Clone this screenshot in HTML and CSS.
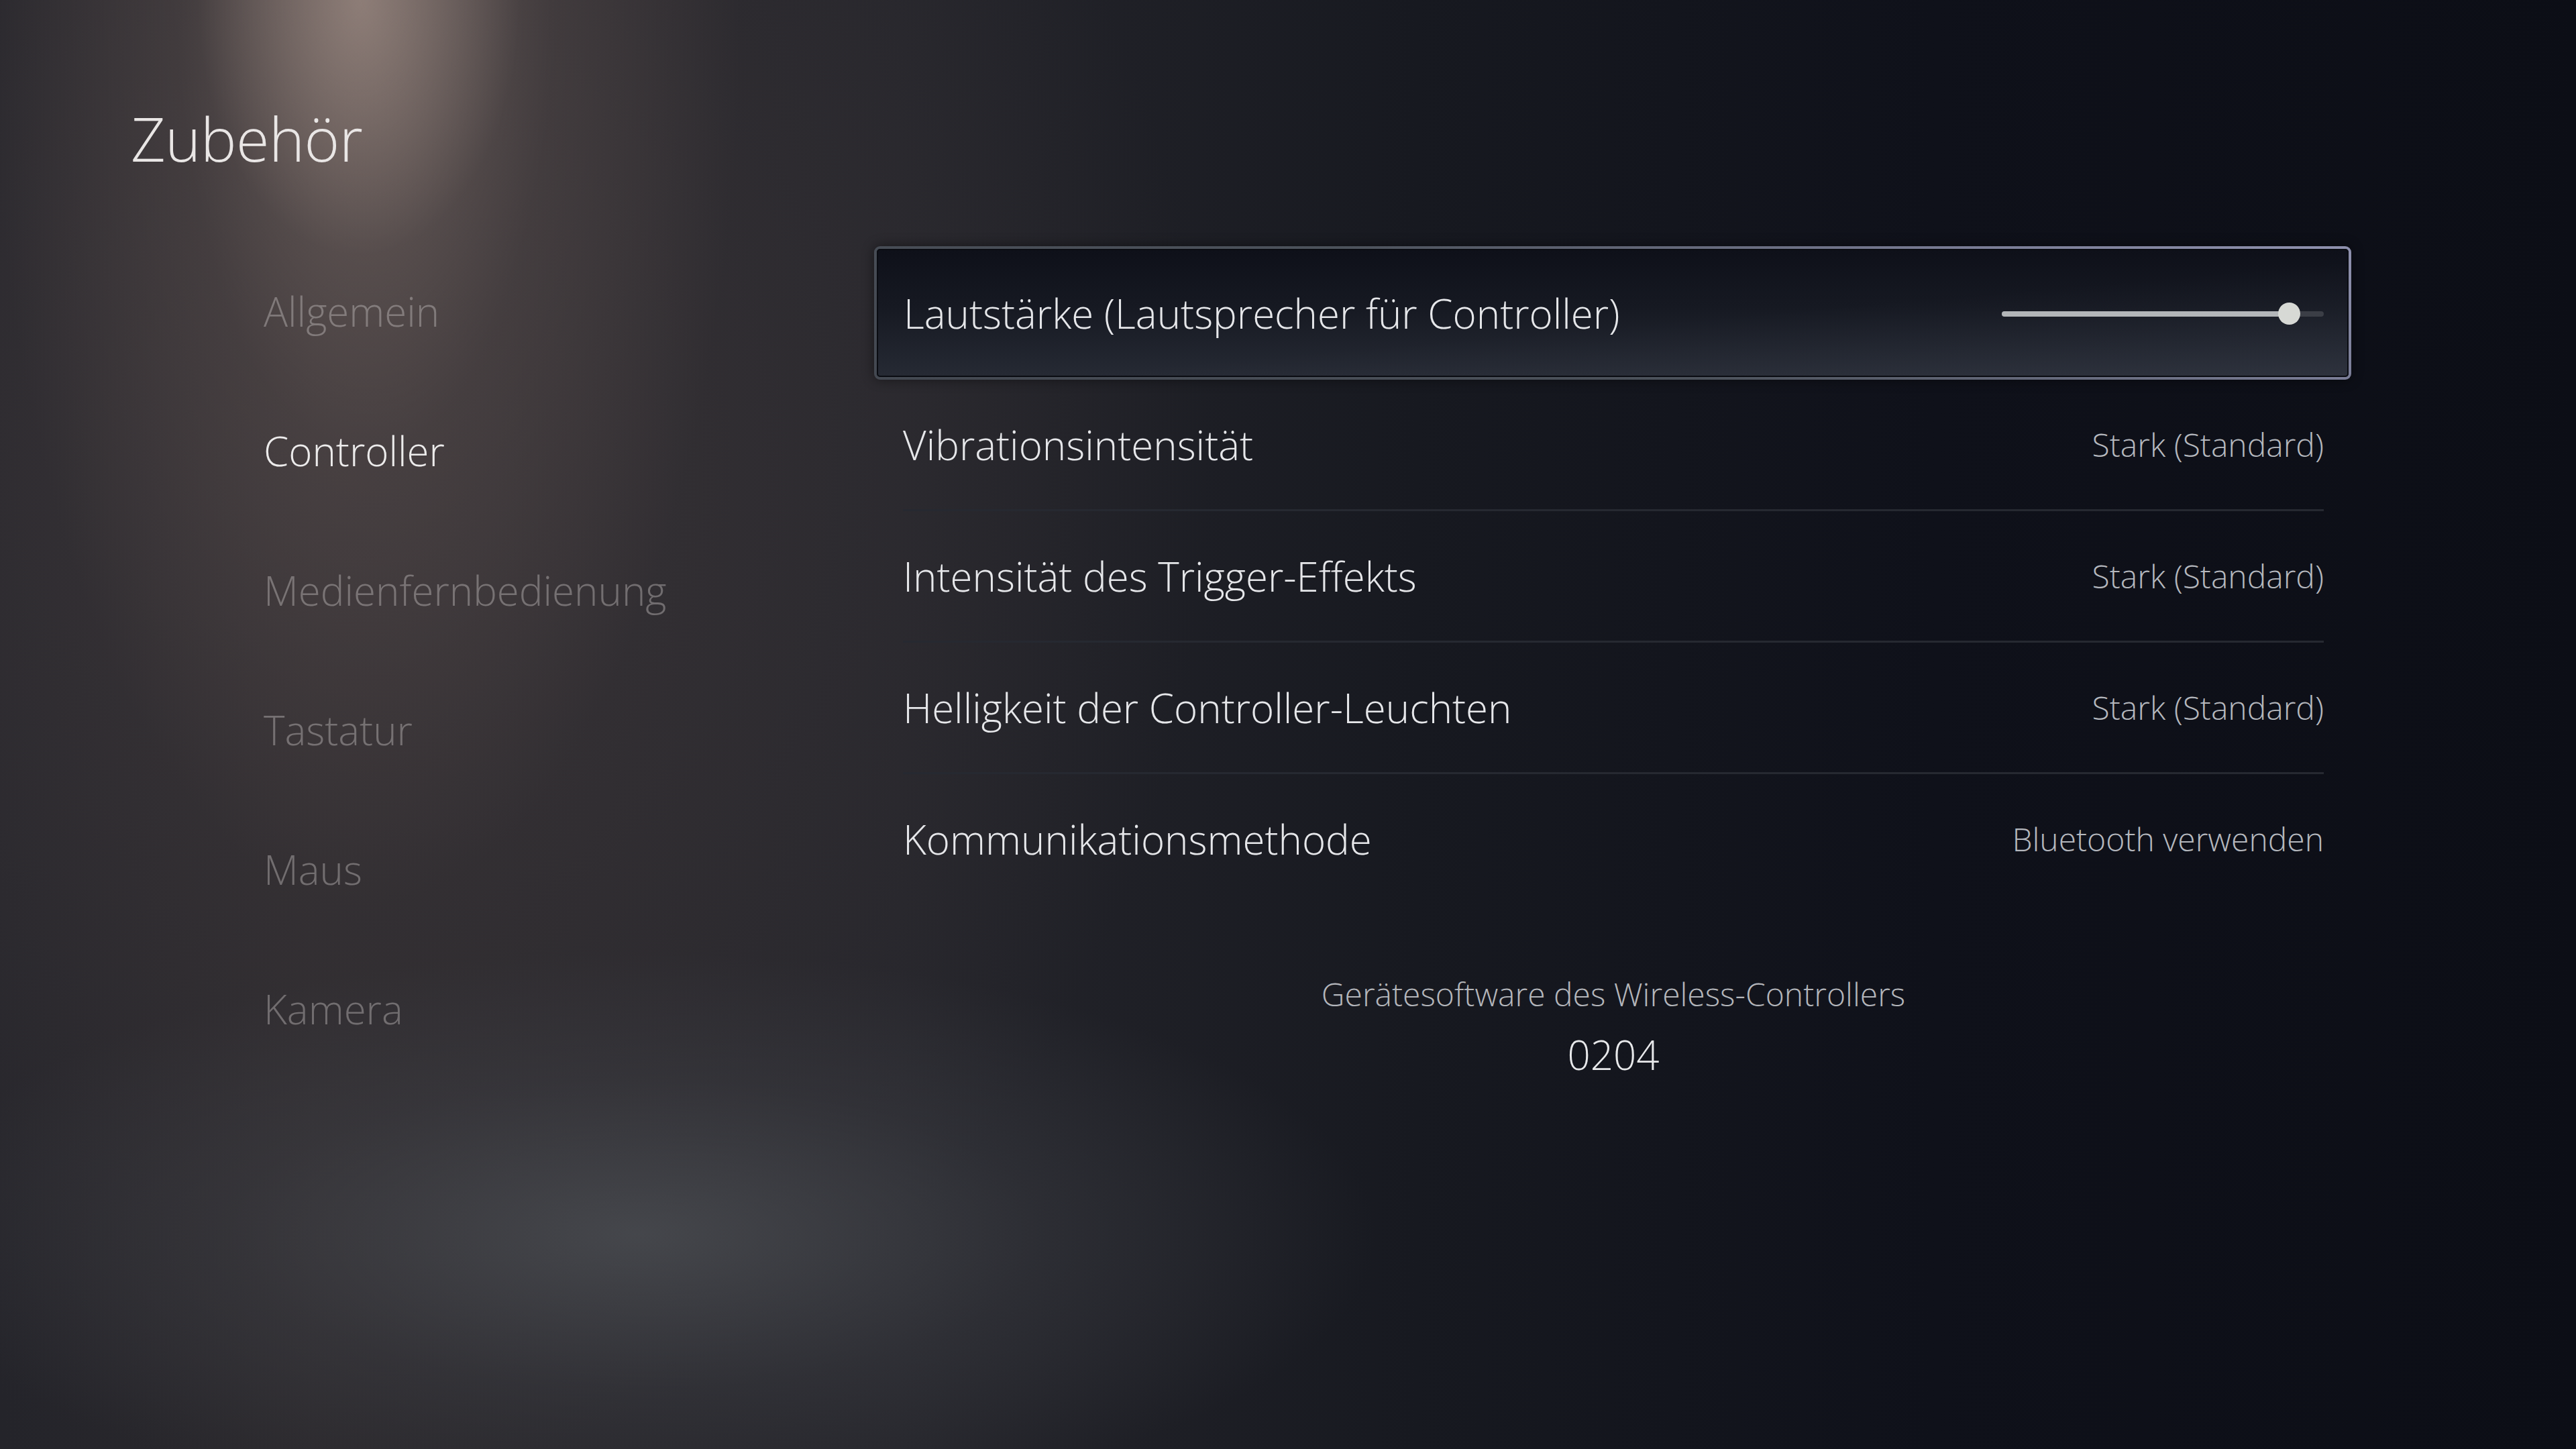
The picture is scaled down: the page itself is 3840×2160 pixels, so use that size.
FILE: index.html
```html
<!DOCTYPE html>
<html lang="de">
<head>
<meta charset="utf-8">
<title>Zubehör</title>
<link rel="stylesheet" href="styles.css">
</head>
<body>
<div class="screen">
  <h1 class="title">Zubehör</h1>
  <div class="content">
    <nav class="menu">
      <div class="menu-item">Allgemein</div>
      <div class="menu-item active">Controller</div>
      <div class="menu-item">Medienfernbedienung</div>
      <div class="menu-item">Tastatur</div>
      <div class="menu-item">Maus</div>
      <div class="menu-item">Kamera</div>
    </nav>
    <main class="panel">
      <div class="row focus">
        <span class="label">Lautstärke (Lautsprecher für Controller)</span>
        <div class="slider">
          <div class="slider-fill" style="width: 89.2%"></div>
          <div class="slider-knob" style="left: 89.2%"></div>
        </div>
      </div>
      <div class="row">
        <span class="label">Vibrationsintensität</span>
        <span class="value">Stark (Standard)</span>
      </div>
      <div class="row">
        <span class="label">Intensität des Trigger-Effekts</span>
        <span class="value">Stark (Standard)</span>
      </div>
      <div class="row">
        <span class="label">Helligkeit der Controller-Leuchten</span>
        <span class="value">Stark (Standard)</span>
      </div>
      <div class="row last">
        <span class="label">Kommunikationsmethode</span>
        <span class="value">Bluetooth verwenden</span>
      </div>
      <div class="info">
        <div class="info-title">Gerätesoftware des Wireless-Controllers</div>
        <div class="info-value">0204</div>
      </div>
    </main>
  </div>
</div>
</body>
</html>
```
FILE: styles.css
```css
html, body {
  margin: 0;
  padding: 0;
}
body {
  width: 3840px;
  height: 2160px;
  overflow: hidden;
  font-family: "Open Sans", "Noto Sans", sans-serif;
  font-weight: 300;
  color: #e6e7ea;
  background:
    radial-gradient(ellipse 240px 380px at 535px 0px, rgba(175,155,146,0.5), rgba(175,155,146,0) 100%),
    radial-gradient(ellipse 560px 1350px at 545px 0px, rgba(132,116,110,0.7), rgba(100,88,86,0.32) 50%, rgba(90,80,80,0) 100%),
    radial-gradient(ellipse 1100px 420px at 950px 1840px, rgba(80,83,88,0.7), rgba(70,72,78,0.3) 55%, rgba(60,60,66,0) 100%),
    radial-gradient(ellipse 1300px 1500px at 500px 700px, rgba(70,62,64,0.55), rgba(60,55,58,0) 100%),
    linear-gradient(to right, #24242a 0%, #2b292d 12%, #25252b 35%, #171920 55%, #0f111a 75%, #0c0e16 100%);
}
.screen {
  padding: 161px 0 0 195px;
}
.title {
  margin: 0;
  font-size: 90px;
  line-height: 90px;
  letter-spacing: -0.5px;
  font-weight: 300;
  color: #e9e6e5;
}
.content {
  display: flex;
  margin-top: 109px;
}
.menu {
  width: 1108px;
  flex: none;
  padding-left: 198px;
  box-sizing: border-box;
}
.menu-item {
  height: 208px;
  line-height: 208px;
  font-size: 60px;
  color: rgba(200,196,196,0.42);
  white-space: nowrap;
}
.menu-item.active {
  color: #ecebeb;
}
.panel {
  width: 2202px;
  flex: none;
  padding-top: 7px;
}
.row {
  display: flex;
  align-items: center;
  justify-content: space-between;
  height: 196px;
  margin: 0 41px 0 43px;
  border-bottom: 3px solid #262931;
  box-sizing: border-box;
}
.row.last {
  border-bottom-color: transparent;
}
.row.focus {
  height: 199px;
  margin: 0;
  padding: 0 37px 0 40px;
  border: 4px solid transparent;
  border-radius: 9px;
  background:
    linear-gradient(175deg, rgba(255,255,255,0) 55%, rgba(120,130,150,0.10) 100%) padding-box,
    linear-gradient(to bottom, #0e1019 0%, #161922 45%, #262a34 100%) padding-box,
    linear-gradient(20deg, #434851 0%, #4c525b 45%, #7a7d96 80%, #8f91ae 100%) border-box;
  box-shadow: inset 0 0 0 2px #0a0c12, 0 0 18px rgba(0,0,0,0.45);
}
.label {
  font-size: 60px;
  line-height: 1;
  color: #e6e7ea;
  white-space: nowrap;
}
.value {
  font-size: 48px;
  line-height: 1;
  color: #b5b8be;
  white-space: nowrap;
}
.slider {
  position: relative;
  width: 480px;
  height: 8px;
  border-radius: 4px;
  background: #3b3e46;
  margin-top: 2px;
}
.slider-fill {
  height: 100%;
  border-radius: 4px;
  background: #b3b6b9;
}
.slider-knob {
  position: absolute;
  top: 50%;
  width: 33px;
  height: 33px;
  margin: -16.5px 0 0 -16.5px;
  border-radius: 50%;
  background: #d7d9d5;
}
.info {
  margin: 103px 41px 0 43px;
  text-align: center;
}
.info-title {
  font-size: 48px;
  line-height: 57.6px;
  color: #b4b6bb;
}
.info-value {
  margin-top: 25px;
  font-size: 60px;
  line-height: 72px;
  color: #e8e9eb;
}
```
